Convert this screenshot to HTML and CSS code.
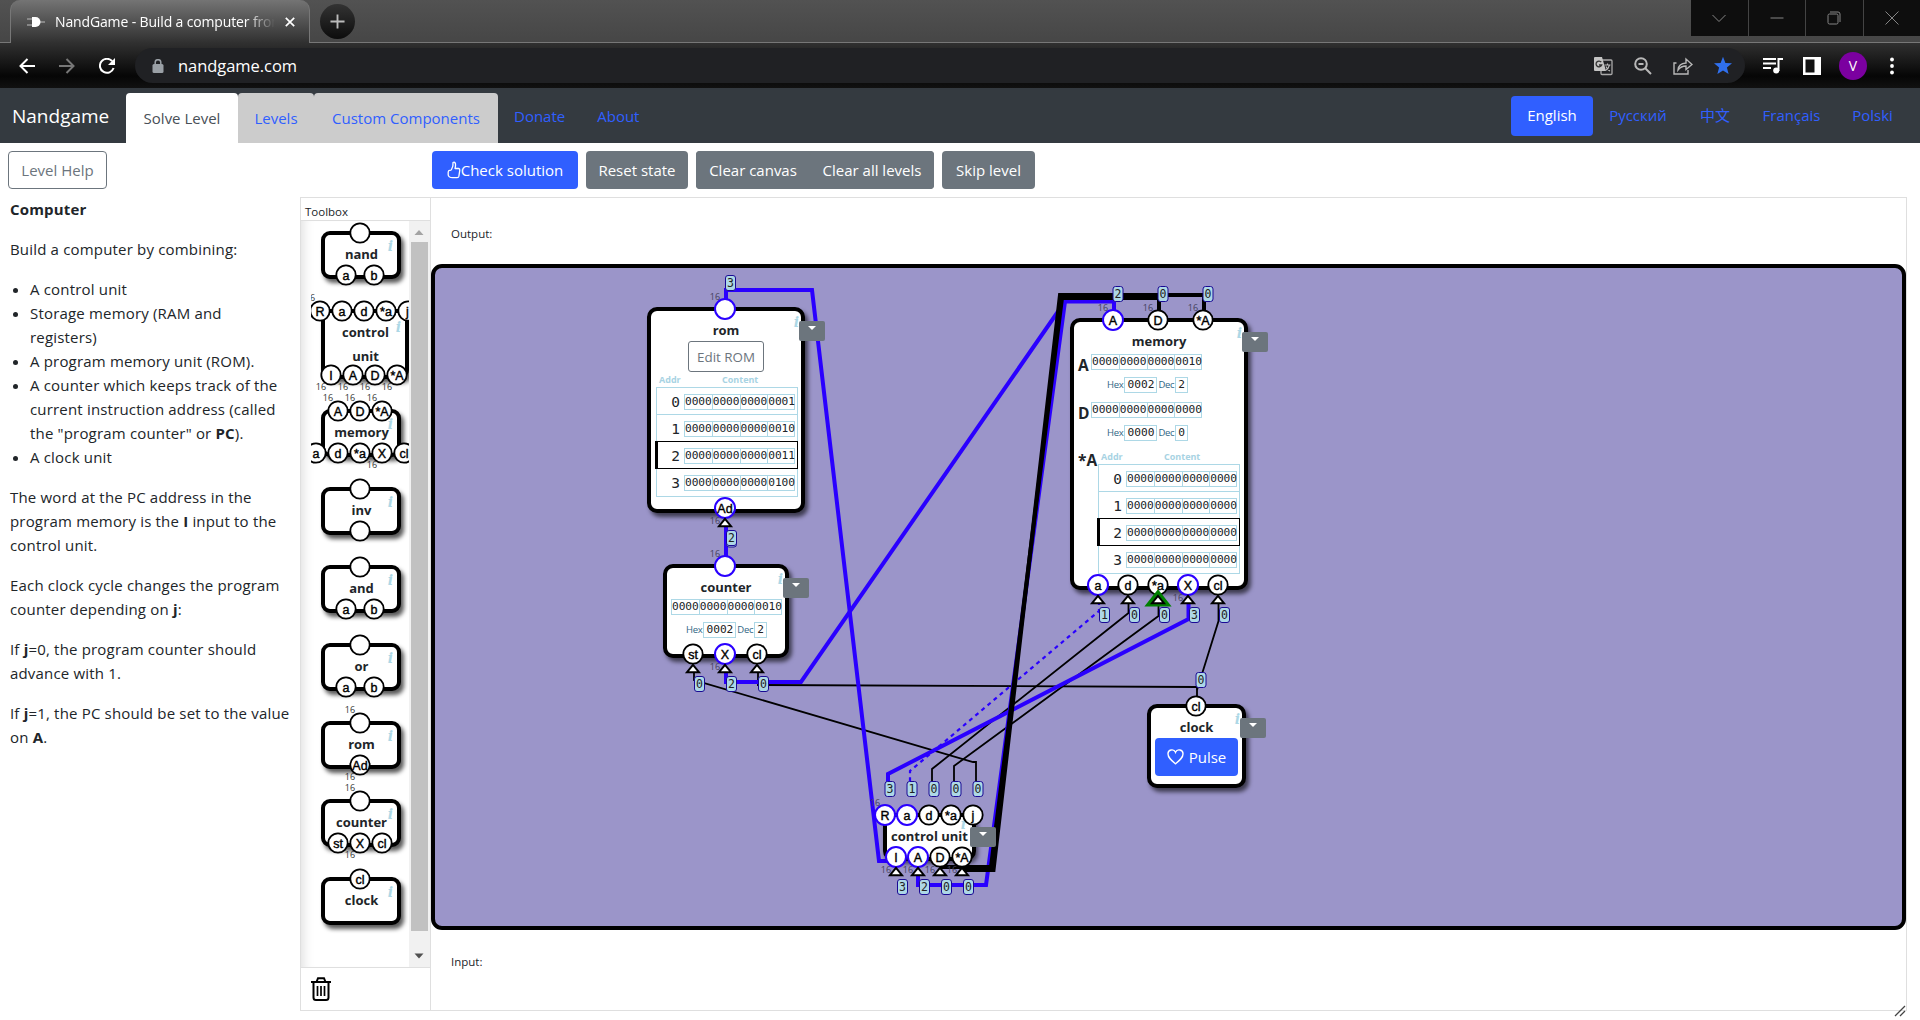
FILE: index.html
```html
<!DOCTYPE html>
<html lang="en">
<head>
<meta charset="utf-8">
<title>NandGame - Build a computer from scratch</title>
<link rel="stylesheet" href="styles.css">
</head>
<body>
<svg class="defs" width="0" height="0">
  <defs>
    <path id="arrow" d="M0 .8 6 8.2H-6Z" fill="#fff" stroke="#000" stroke-width="2"/>
    <rect id="badge" x="-5" y="-7.5" width="10" height="15" rx="2.5" fill="#add8e6" stroke="#1a0a94" stroke-width="1"/>
    <circle id="pin" r="9.7" fill="#fff" stroke="#000" stroke-width="1.8"/>
    <circle id="hot" r="10" fill="#fff" stroke="#2a00ff" stroke-width="2"/>
  </defs>
</svg>

<header class="browser">
  <div class="tabstrip">
    <div class="tab">
      <svg class="favicon" viewBox="0 0 18 14"><path d="M0 4h5M0 10h5M13 7h5" stroke="#999" stroke-width="1.6"/><path d="M5 2h3.500a5 5 0 0 1 0 10H5Z" fill="#fff"/></svg>
      <span class="tab-title">NandGame - Build a computer from</span>
      <svg class="close" viewBox="0 0 10 10"><path d="M.8.8l8.400 8.400M9.200.8.8 9.200" stroke="#fff" stroke-width="1.7"/></svg>
    </div>
    <div class="newtab"><svg viewBox="0 0 16 16"><path d="M8 .5v15M.5 8h15" stroke="#bbb" stroke-width="2"/></svg></div>
    <div class="winbtns">
      <span><svg viewBox="0 0 14 14"><path d="M.5 4 7 10.500 13.500 4"/></svg></span>
      <span><svg viewBox="0 0 14 14"><path d="M.5 7h13"/></svg></span>
      <span><svg viewBox="0 0 14 14"><rect x="1" y="3" width="10" height="10" rx="1.500"/><path d="M3 1h8q2 0 2 2v8"/></svg></span>
      <span><svg viewBox="0 0 14 14"><path d="M.5.5l13 13M13.500.5l-13 13"/></svg></span>
    </div>
  </div>
  <div class="toolbar">
    <svg class="navico" viewBox="0 0 16 16"><path d="M16 8H1.500M8.500 1 1.500 8l7 7"/></svg>
    <svg class="navico dim" viewBox="0 0 16 16"><path d="M0 8h14.500M7.500 1l7 7-7 7"/></svg>
    <svg class="navico" viewBox="0 0 16 16"><path d="M14.600 10A7 7 0 1 1 13.200 3.200"/><path d="M16 0v7H9Z" fill="#fff" stroke="none"/></svg>
    <div class="omnibox">
      <svg class="lock" viewBox="0 0 12 14"><rect x=".5" y="5" width="11" height="9" rx="1.500" fill="#9aa0a6"/><path d="M3.200 6V3.500a2.800 2.800 0 0 1 5.600 0V6" fill="none" stroke="#9aa0a6" stroke-width="1.500"/></svg>
      <span class="url">nandgame.com</span>
      <svg class="oico" viewBox="0 0 20 20"><rect x="8" y="4" width="11" height="14.500" rx="1" fill="none" stroke="#aaa" stroke-width="1.300"/><path d="M2 1h7l4 14H2q-1 0-1-1V2q0-1 1-1Z" fill="#c4c4c4"/><path d="M8.300 6.200A2.900 2.900 0 1 0 8.700 9H6" fill="none" stroke="#333" stroke-width="1.300"/><path d="M11.500 9h6M14.500 7.500V9M16.500 9q-1 4-4 5.500M13 10.500q1 3 4 4.500" fill="none" stroke="#bbb" stroke-width="1.100"/></svg>
      <svg class="oico" viewBox="0 0 20 20"><g fill="none" stroke="#b8b8b8" stroke-width="2"><circle cx="8" cy="8" r="5.800"/><path d="M5.500 8h5M12.300 12.300l5.700 5.700"/></g></svg>
      <svg class="oico" viewBox="0 0 20 20"><g fill="none" stroke="#b8b8b8" stroke-width="1.400"><path d="M3.500 7H1v11h14v-4"/><path d="M5 14q.5-6.500 8-7V3l6 5.500-6 5v-3.500q-5 0-8 4Z"/></g></svg>
      <svg class="oico" viewBox="0 0 20 20"><path d="M10 .8l2.400 6.100 6.600.4-5.100 4.200 1.700 6.500L10 14.400 4.400 18l1.700-6.500L1 7.300l6.600-.4Z" fill="#3070ee"/></svg>
    </div>
    <svg class="bico" viewBox="0 0 20 20"><g stroke="#fff" stroke-width="2" fill="none"><path d="M0 3h13M0 7.500h13M0 12h8M15.500 15V3H20"/></g><circle cx="13.200" cy="14.500" r="3" fill="#fff"/></svg>
    <svg class="bico panel" viewBox="0 0 18 18"><path d="M0 0h18v18H0Z" fill="#fff"/><path d="M2.500 2.500h9v13h-9Z" fill="#111"/></svg>
    <div class="avatar">V</div>
    <svg class="dots" viewBox="0 0 4 18"><circle cx="2" cy="2.500" r="1.900"/><circle cx="2" cy="9" r="1.900"/><circle cx="2" cy="15.500" r="1.900"/></svg>
  </div>
</header>

<nav class="nav">
  <span class="brand">Nandgame</span>
  <a class="navtab active w1">Solve Level</a><a class="navtab w2">Levels</a><a class="navtab w3">Custom Components</a>
  <a class="link">Donate</a><a class="link">About</a>
  <div class="langs"><a class="lang on">English</a><a class="lang l2">Русский</a><a class="lang l3">中文</a><a class="lang l4">Français</a><a class="lang l5">Polski</a></div>
</nav>

<div class="actions">
  <button class="btn outline b-help">Level Help</button>
  <button class="btn primary b-check"><svg viewBox="0 0 14 18"><path d="M4.500 8.500Q6.500 5 6 1.500q2-1 2.500 1.500.3 2-.5 4.500h3.500q1.500.2 1.300 1.700l-.9 6q-.3 1.500-1.700 1.500H5.500Q1.500 16.500 1.200 14v-3q.2-1.500 1.500-1.600Q4 9.400 4.500 8.500Z" fill="none" stroke="#fff" stroke-width="1.300" stroke-linejoin="round"/></svg>Check solution</button>
  <button class="btn grey b-reset">Reset state</button>
  <div class="group"><button class="btn grey b-canvas">Clear canvas</button><button class="btn grey b-levels">Clear all levels</button></div>
  <button class="btn grey b-skip">Skip level</button>
</div>

<main class="work">
  <article class="help">
    <p><b>Computer</b></p>
    <p>Build a computer by combining:</p>
    <ul>
      <li>A control unit</li>
      <li>Storage memory (RAM and<br>registers)</li>
      <li>A program memory unit (ROM).</li>
      <li>A counter which keeps track of the<br>current instruction address (called<br>the "program counter" or <b>PC</b>).</li>
      <li>A clock unit</li>
    </ul>
    <p>The word at the PC address in the<br>program memory is the <b>I</b> input to the<br>control unit.</p>
    <p>Each clock cycle changes the program<br>counter depending on <b>j</b>:</p>
    <p>If <b>j</b>=0, the program counter should<br>advance with 1.</p>
    <p>If <b>j</b>=1, the PC should be set to the value<br>on <b>A</b>.</p>
  </article>

  <aside class="toolbox">
    <div class="tb-title">Toolbox</div>
    <div class="tb-body">
      <div class="tb-list">
        <div class="comp">nand<i>i</i>
          <svg class="pins"><use href="#pin" x="39" y="2"/><use href="#pin" x="25" y="44"/><use href="#pin" x="53" y="44"/><text x="25" y="48.500">a</text><text x="53" y="48.500">b</text></svg></div>
        <div class="comp tall"><span>control<br>unit</span><i>i</i>
          <svg class="pins"><use href="#pin" x="-1" y="2"/><use href="#pin" x="21" y="2"/><use href="#pin" x="43" y="2"/><use href="#pin" x="65" y="2"/><use href="#pin" x="87" y="2"/><use href="#pin" x="10" y="66"/><use href="#pin" x="32" y="66"/><use href="#pin" x="54" y="66"/><use href="#pin" x="76" y="66"/>
          <text x="-1" y="6.500">R</text><text x="21" y="6.500">a</text><text x="43" y="6.500">d</text><text x="65" y="6.500">*a</text><text x="86.500" y="6.500">j</text><text x="10" y="70.500">I</text><text x="32" y="70.500">A</text><text x="54" y="70.500">D</text><text x="76" y="70.500">*A</text>
          <g class="bits"><text x="-11" y="-8">16</text><text x="0" y="81">16</text><text x="22" y="81">16</text><text x="44" y="81">16</text><text x="66" y="81">16</text></g></svg></div>
        <div class="comp">memory<i>i</i>
          <svg class="pins"><use href="#pin" x="17" y="2"/><use href="#pin" x="39" y="2"/><use href="#pin" x="61" y="2"/><use href="#pin" x="-5" y="44"/><use href="#pin" x="17" y="44"/><use href="#pin" x="39" y="44"/><use href="#pin" x="61" y="44"/><use href="#pin" x="83" y="44"/>
          <text x="17" y="6.500">A</text><text x="39" y="6.500">D</text><text x="61" y="6.500">*A</text><text x="-5" y="48.500">a</text><text x="17" y="48.500">d</text><text x="39" y="48.500">*a</text><text x="61" y="48.500">X</text><text x="83" y="48.500">cl</text>
          <g class="bits"><text x="7" y="-8">16</text><text x="29" y="-8">16</text><text x="51" y="-8">16</text><text x="51" y="59">16</text></g></svg></div>
        <div class="comp">inv<i>i</i>
          <svg class="pins"><use href="#pin" x="39" y="2"/><use href="#pin" x="39" y="44"/></svg></div>
        <div class="comp">and<i>i</i>
          <svg class="pins"><use href="#pin" x="39" y="2"/><use href="#pin" x="25" y="44"/><use href="#pin" x="53" y="44"/><text x="25" y="48.500">a</text><text x="53" y="48.500">b</text></svg></div>
        <div class="comp">or<i>i</i>
          <svg class="pins"><use href="#pin" x="39" y="2"/><use href="#pin" x="25" y="44"/><use href="#pin" x="53" y="44"/><text x="25" y="48.500">a</text><text x="53" y="48.500">b</text></svg></div>
        <div class="comp">rom<i>i</i>
          <svg class="pins"><g class="bits"><text x="29" y="-8">16</text><text x="29" y="59">16</text></g><use href="#pin" x="39" y="2"/><use href="#pin" x="39" y="44"/><text x="39" y="48.500">Ad</text></svg></div>
        <div class="comp">counter<i>i</i>
          <svg class="pins"><g class="bits"><text x="29" y="-8">16</text><text x="29" y="59">16</text></g><use href="#pin" x="39" y="2"/><use href="#pin" x="17" y="44"/><use href="#pin" x="39" y="44"/><use href="#pin" x="61" y="44"/><text x="17" y="48.500">st</text><text x="39" y="48.500">X</text><text x="61" y="48.500">cl</text></svg></div>
        <div class="comp">clock<i>i</i>
          <svg class="pins"><use href="#pin" x="39" y="2"/><text x="39" y="6.500">cl</text></svg></div>
      </div>
      <div class="scroll"><svg viewBox="0 0 21 21"><path d="M5.500 14 10 9l4.500 5Z" fill="#a3a3a3"/></svg><div class="thumb"></div><svg viewBox="0 0 21 36"><path d="M5.500 22.500h9L10 27.500Z" fill="#505050"/></svg></div>
    </div>
    <div class="tb-trash"><svg viewBox="0 0 20 24"><g fill="none" stroke="#000" stroke-width="2"><path d="M0 5h20M5.500 5 7 1.200h6L14.500 5M2.500 5v15.500Q2.500 23 5 23h10q2.500 0 2.500-2.500V5"/><path d="M6.500 9v10M10 9v10M13.500 9v10" stroke-width="1.700"/></g></svg></div>
  </aside>

  <section class="stage">
    <div class="io">Output:</div>
    <div class="canvas">
      <svg class="layer" viewBox="435 268 1467 658">
        <g fill="none" stroke="#000" stroke-width="1.800">
          <path d="M694 670v10L973 762h3v20"/>
          <path d="M758 670v15L1197 687v14"/>
          <path d="M1128.500 601v12L932 769v14"/>
          <path d="M1158.500 601v15L954 766v17"/>
          <path d="M1218.500 601v20L1197 690"/>
        </g>
        <g fill="none" stroke="#2a00ff" stroke-width="4">
          <path d="M726 303v-13h86L879 861h10"/>
          <path d="M726 560v-36"/>
          <path d="M726 670v12h75L1065 301.500"/>
          <path d="M1114 312v-10.500h-49L986 885h-68v-12"/>
          <path d="M1188.500 601v18L888 774v9"/>
          <path d="M1099 601v10L910 771v12" stroke-width="2.200" stroke-dasharray="4 4"/>
        </g>
        <g fill="none" stroke="#000" stroke-width="4">
          <path d="M1159 312v-14h-97L991 867h-51"/>
          <path d="M1204 312v-17h-144L993.500 870H962"/>
        </g>
      </svg>

      <div class="node n-rom">
        <h4>rom</h4><i>i</i>
        <button class="edit">Edit ROM</button>
        <div class="head"><span>Addr</span><span>Content</span></div>
        <div class="table">
          <div class="row"><em>0</em><div class="bin"><u>0000</u><u>0000</u><u>0000</u><u>0001</u></div></div>
          <div class="row"><em>1</em><div class="bin"><u>0000</u><u>0000</u><u>0000</u><u>0010</u></div></div>
          <div class="row cur"><em>2</em><div class="bin"><u>0000</u><u>0000</u><u>0000</u><u>0011</u></div></div>
          <div class="row"><em>3</em><div class="bin"><u>0000</u><u>0000</u><u>0000</u><u>0100</u></div></div>
        </div>
        <div class="menu"></div>
      </div>

      <div class="node n-counter">
        <h4>counter</h4><i>i</i>
        <div class="bin"><u>0000</u><u>0000</u><u>0000</u><u>0010</u></div>
        <div class="hex">Hex<u>0002</u>Dec<u>2</u></div>
        <div class="menu"></div>
      </div>

      <div class="node n-memory">
        <h4>memory</h4><i>i</i>
        <div class="reg"><b>A</b><div class="bin"><u>0000</u><u>0000</u><u>0000</u><u>0010</u></div></div>
        <div class="hex">Hex<u>0002</u>Dec<u>2</u></div>
        <div class="reg"><b>D</b><div class="bin"><u>0000</u><u>0000</u><u>0000</u><u>0000</u></div></div>
        <div class="hex">Hex<u>0000</u>Dec<u>0</u></div>
        <div class="ram">
          <b>*A</b>
          <div>
            <div class="head"><span>Addr</span><span>Content</span></div>
            <div class="table">
              <div class="row"><em>0</em><div class="bin"><u>0000</u><u>0000</u><u>0000</u><u>0000</u></div></div>
              <div class="row"><em>1</em><div class="bin"><u>0000</u><u>0000</u><u>0000</u><u>0000</u></div></div>
              <div class="row cur"><em>2</em><div class="bin"><u>0000</u><u>0000</u><u>0000</u><u>0000</u></div></div>
              <div class="row"><em>3</em><div class="bin"><u>0000</u><u>0000</u><u>0000</u><u>0000</u></div></div>
            </div>
          </div>
        </div>
        <div class="menu"></div>
      </div>

      <div class="node n-clock">
        <h4>clock</h4><i>i</i>
        <button class="btn primary pulse"><svg viewBox="0 0 17 16"><path d="M8.500 14.800C4 11 1 8.500 1 5A3.900 3.900 0 0 1 8.500 3.300 3.900 3.900 0 0 1 16 5c0 3.500-3 6-7.500 9.800Z" fill="none" stroke="#fff" stroke-width="1.400"/></svg>Pulse</button>
        <div class="menu"></div>
      </div>

      <div class="node n-cu"><h4>control unit</h4><i>i</i><div class="menu"></div></div>

      <svg class="layer" viewBox="435 268 1467 658">
        <g class="bits">
          <text x="715" y="300">16</text><text x="715" y="524">16</text><text x="715" y="557">16</text><text x="715" y="670">16</text>
          <text x="1103" y="311">16</text><text x="1148" y="311">16</text><text x="1193" y="311">16</text><text x="1178" y="601">16</text>
          <text x="875" y="806">16</text><text x="886" y="873">16</text><text x="908" y="873">16</text><text x="930" y="873">16</text><text x="952" y="873">16</text>
        </g>
        <g>
          <use href="#hot" x="725" y="309"/><use href="#hot" x="725" y="508"/><use href="#hot" x="725" y="566"/>
          <use href="#pin" x="693" y="654"/><use href="#hot" x="725" y="654"/><use href="#pin" x="757" y="654"/>
          <use href="#hot" x="1113" y="320"/><use href="#pin" x="1158" y="320"/><use href="#pin" x="1203" y="320"/>
          <use href="#hot" x="1098" y="585"/><use href="#pin" x="1128" y="585"/><use href="#pin" x="1158" y="585"/><use href="#hot" x="1188" y="585"/><use href="#pin" x="1218" y="585"/>
          <use href="#pin" x="1196" y="706"/>
          <use href="#hot" x="885" y="815"/><use href="#hot" x="907" y="815"/><use href="#pin" x="929" y="815"/><use href="#pin" x="951" y="815"/><use href="#pin" x="973" y="815"/>
          <use href="#hot" x="896" y="857"/><use href="#hot" x="918" y="857"/><use href="#pin" x="940" y="857"/><use href="#pin" x="962" y="857"/>
        </g>
        <g class="pt">
          <text x="725" y="512.500">Ad</text><text x="693" y="658.500">st</text><text x="725" y="658.500">X</text><text x="757" y="658.500">cl</text>
          <text x="1113" y="324.500">A</text><text x="1158" y="324.500">D</text><text x="1203" y="324.500">*A</text>
          <text x="1098" y="589.500">a</text><text x="1128" y="589.500">d</text><text x="1158" y="589.500">*a</text><text x="1188" y="589.500">X</text><text x="1218" y="589.500">cl</text>
          <text x="1196" y="710.500">cl</text>
          <text x="885" y="819.500">R</text><text x="907" y="819.500">a</text><text x="929" y="819.500">d</text><text x="951" y="819.500">*a</text><text x="973" y="819.500">j</text>
          <text x="896" y="861.500">I</text><text x="918" y="861.500">A</text><text x="940" y="861.500">D</text><text x="962" y="861.500">*A</text>
        </g>
        <path d="M1158 592.500 1167.500 604.500h-19Z" fill="#fff" stroke="#008000" stroke-width="4"/>
        <use href="#arrow" x="725" y="518"/><use href="#arrow" x="693" y="664"/><use href="#arrow" x="725" y="664"/><use href="#arrow" x="757" y="664"/>
        <use href="#arrow" x="1098" y="595"/><use href="#arrow" x="1128" y="595"/><use href="#arrow" x="1158" y="595"/><use href="#arrow" x="1188" y="595"/><use href="#arrow" x="1218" y="595"/>
        <use href="#arrow" x="896" y="867"/><use href="#arrow" x="918" y="867"/><use href="#arrow" x="940" y="867"/><use href="#arrow" x="962" y="867"/>
        <g>
          <use href="#badge" x="730.500" y="283"/><use href="#badge" x="731.500" y="539.500"/><use href="#badge" x="731.500" y="538"/>
          <use href="#badge" x="699.500" y="684"/><use href="#badge" x="731.500" y="684"/><use href="#badge" x="763.500" y="684"/>
          <use href="#badge" x="1118" y="294"/><use href="#badge" x="1163" y="294"/><use href="#badge" x="1208" y="294"/>
          <use href="#badge" x="1104.500" y="615"/><use href="#badge" x="1134.500" y="615"/><use href="#badge" x="1164.500" y="615"/><use href="#badge" x="1194.500" y="615"/><use href="#badge" x="1224.500" y="615"/>
          <use href="#badge" x="1201" y="680"/>
          <use href="#badge" x="890" y="789"/><use href="#badge" x="912" y="789"/><use href="#badge" x="934" y="789"/><use href="#badge" x="956" y="789"/><use href="#badge" x="978" y="789"/>
          <use href="#badge" x="902.500" y="887"/><use href="#badge" x="924.500" y="887"/><use href="#badge" x="946.500" y="887"/><use href="#badge" x="968.500" y="887"/>
        </g>
        <g class="val">
          <text x="730.500" y="287">3</text><text x="731.500" y="542">2</text>
          <text x="699.500" y="688">0</text><text x="731.500" y="688">2</text><text x="763.500" y="688">0</text>
          <text x="1118" y="298">2</text><text x="1163" y="298">0</text><text x="1208" y="298">0</text>
          <text x="1104.500" y="619">1</text><text x="1134.500" y="619">0</text><text x="1164.500" y="619">0</text><text x="1194.500" y="619">3</text><text x="1224.500" y="619">0</text>
          <text x="1201" y="684">0</text>
          <text x="890" y="793">3</text><text x="912" y="793">1</text><text x="934" y="793">0</text><text x="956" y="793">0</text><text x="978" y="793">0</text>
          <text x="902.500" y="891">3</text><text x="924.500" y="891">2</text><text x="946.500" y="891">0</text><text x="968.500" y="891">0</text>
        </g>
      </svg>
    </div>
    <div class="io in">Input:</div>
  </section>
</main>
<svg class="grip" viewBox="0 0 12 12"><path d="M1 11 11 1M6 11l5-5" stroke="#444" stroke-width="1.300"/></svg>
</body>
</html>
```
FILE: styles.css
```css
* { box-sizing: border-box; }
body {
  margin: 0; width: 1920px; height: 1020px; overflow: hidden; position: relative;
  display: flex; flex-direction: column; background: #fff; color: #212529;
  font: 15px/24px "Open Sans", "Noto Sans CJK SC", sans-serif;
}
svg { display: block; flex: none; }
.defs { position: absolute; }

/* browser frame */
.browser { flex: none; height: 88px; background: linear-gradient(#525252 0, #464646 42px, #303030 43px, #060606 76px, #111 88px); color: #fff; }
.tabstrip { height: 43px; display: flex; border-bottom: 1px solid #777; }
.tab {
  margin-left: 10px; width: 300px; height: 43px; display: flex; align-items: center; padding: 0 14px 0 16px;
  border: 1px solid #777; border-width: 0 1px; border-radius: 10px 10px 0 0; background: linear-gradient(#747474, #303030);
}
.favicon { width: 18px; height: 14px; }
.tab-title {
  margin-left: 10px; width: 220px; overflow: hidden; white-space: nowrap; font-size: 14px; letter-spacing: -.14px;
  -webkit-mask-image: linear-gradient(90deg, #000 190px, transparent 220px); mask-image: linear-gradient(90deg, #000 190px, transparent 220px);
}
.close { width: 10px; height: 10px; margin-left: 10px; }
.newtab { width: 35px; height: 35px; margin: 4px 0 0 10px; border-radius: 50%; background: linear-gradient(#333, #0c0c0c); display: flex; align-items: center; justify-content: center; }
.newtab svg { width: 15px; height: 15px; }
.winbtns { margin-left: auto; height: 36px; display: flex; gap: 1px; background: #444; }
.winbtns span { width: 56.500px; background: #0e0e0e; display: flex; align-items: center; justify-content: center; }
.winbtns svg { width: 14px; height: 14px; fill: none; stroke: #858585; }
.toolbar { height: 45px; display: flex; align-items: center; padding: 0 26px 0 19px; }
.navico { width: 16px; height: 16px; margin-right: 24px; fill: none; stroke: #fff; stroke-width: 2; }
.navico.dim { stroke: #777; }
.omnibox { margin-left: -4px; width: 1610px; height: 35px; border-radius: 18px; background: #202124; display: flex; align-items: center; padding: 0 12px 0 17px; }
.lock { width: 12px; height: 14px; }
.url { margin: 0 auto 0 14px; font-size: 16.500px; letter-spacing: -.05px; }
.oico { width: 20px; height: 20px; margin-left: 20px; }
.bico { width: 20px; height: 20px; margin-left: 18px; }
.bico.panel { width: 18px; height: 18px; margin-left: 20px; }
.avatar { width: 28px; height: 28px; margin-left: 18px; border-radius: 50%; background: #7b00a0; text-align: center; line-height: 28px; font-size: 14px; }
.dots { width: 4px; height: 18px; margin-left: auto; fill: #fff; }

/* site navigation */
.nav { flex: none; height: 55px; padding-left: 12px; background: #343a40; display: flex; align-items: center; white-space: nowrap; }
.brand { width: 114px; color: #fff; font-size: 19px; line-height: 30px; margin-top: 1px; }
.navtab { align-self: flex-end; height: 50px; line-height: 50px; text-align: center; border-radius: 4px 4px 0 0; background: #ccc; color: #305fff; }
.navtab.active { background: #fff; color: #495057; }
.w1 { width: 112px; } .w2 { width: 76px; } .w3 { width: 184px; }
.link { margin: 1px 16px 0; color: #305fff; }
.langs { margin-left: auto; margin-right: 11px; display: flex; }
.lang { height: 40px; line-height: 39px; text-align: center; color: #305fff; border-radius: 4px; margin-top: 1px; }
.lang.on { width: 82px; background: #305fff; color: #fff; }
.l2 { width: 90px; } .l3 { width: 64px; } .l4 { width: 89px; } .l5 { width: 73px; }

/* action bar */
.actions { flex: none; height: 54px; padding: 8px 8px 0; display: flex; align-items: flex-start; gap: 8px; }
.btn { height: 38px; padding: 0; border: 0; border-radius: 4px; color: #fff; font: 15px/38px "Open Sans", sans-serif; letter-spacing: 0; white-space: nowrap; display: flex; align-items: center; justify-content: center; }
.primary { background: #305fff; }
.grey { background: #6c757d; }
.outline { background: #fff; border: 1px solid #6c757d; color: #6c757d; }
.b-help { width: 99px; margin-right: 317px; }
.b-check { width: 146px; }
.b-check svg { width: 14px; height: 18px; }
.b-reset { width: 102px; }
.group { display: flex; background: #6c757d; border-radius: 4px; }
.b-canvas { width: 114px; } .b-levels { width: 124px; }
.b-skip { width: 93px; }

/* instructions */
.work { flex: 1; display: flex; min-height: 0; }
.help { width: 300px; padding: 0 0 0 10px; white-space: nowrap; letter-spacing: .18px; }
.help p { margin: 0 0 16px; }
.help ul { margin: 0 0 16px; padding-left: 20px; }

/* toolbox */
.toolbox { width: 130px; height: 814px; border: 1px solid #dfdfdf; border-right: 0; display: flex; flex-direction: column; }
.tb-title { height: 23px; padding-left: 4px; font-size: 11.500px; line-height: 28px; border-bottom: 1px solid #dfdfdf; }
.tb-body { flex: 1; display: flex; min-height: 0; box-shadow: inset 12px 0 12px -10px #ddd; }
.tb-list { margin-left: 10px; width: 98px; padding: 10px 0 0 10px; display: flex; flex-direction: column; gap: 30px; overflow: hidden; }
.comp {
  position: relative; flex: none; width: 80px; height: 48px; border: 4px solid #000; border-radius: 9px; background: #fff;
  box-shadow: 3px 4px 4px rgba(0,0,0,.65); text-align: center; font-weight: 700; font-size: 13px; line-height: 38px; padding-left: 1px;
}
.comp.tall { width: 88px; height: 70px; line-height: 24px; }
.comp.tall span { display: block; padding-top: 7px; }
.comp i, .node i { position: absolute; right: 4px; top: 1px; font: italic bold 14px/20px "DejaVu Serif", serif; color: #add8e6; }
.comp.tall i { top: 4px; right: 4px; }
.pins { position: absolute; left: -4px; top: -4px; width: 1px; height: 1px; overflow: visible; }
.pins text, .pt text { font: 12.500px "Liberation Sans", sans-serif; text-anchor: middle; fill: #000; stroke: #000; stroke-width: .4px; }
.pins .bits text, .bits text { font: 9px "Open Sans", sans-serif; text-anchor: middle; fill: #333; stroke: none; }
.scroll { width: 21px; background: #f1f1f1; display: flex; flex-direction: column; }
.thumb { flex: 1; margin: 0 2px; background: #c1c1c1; }
.tb-trash { height: 43px; padding: 9px 0 0 10px; border-top: 1px solid #dfdfdf; }
.tb-trash svg { width: 20px; height: 24px; }

/* canvas */
.stage { width: 1477px; height: 814px; border: 1px solid #dfdfdf; font-size: 11.500px; display: flex; flex-direction: column; }
.io { height: 66px; padding: 24px 0 0 20px; line-height: 24px; }
.io.in { padding-top: 20px; }
.canvas { position: relative; flex: none; height: 666px; border: 4px solid #000; border-radius: 11px; background: #9b95c9; }
.layer { position: absolute; left: 0; top: 0; width: 1467px; height: 658px; }
.canvas .bits text { fill: #44405c; }
.val text { font: 11.500px "DejaVu Sans Mono", monospace; text-anchor: middle; fill: #222; }
.node { position: absolute; border: 4px solid #000; border-radius: 10px; background: #fff; box-shadow: 3px 4px 4px rgba(0,0,0,.6); }
.node h4 { margin: 0; text-align: center; font-size: 13px; line-height: 20px; padding-top: 9px; white-space: nowrap; }
.node i { right: 2px; top: 1px; }
.n-rom { left: 212px; top: 39px; width: 158px; height: 206px; }
.n-counter { left: 228px; top: 296px; width: 126px; height: 94px; }
.n-memory { left: 635px; top: 50px; width: 178px; height: 272px; }
.n-clock { left: 712px; top: 436px; width: 99px; height: 84px; }
.n-cu { left: 448px; top: 545px; width: 93px; height: 48px; box-shadow: 2px 3px 4px rgba(0,0,0,.55); }
.n-cu i { top: -3px; right: 6px; }
.menu { position: absolute; right: -24px; top: 10px; width: 26px; height: 20px; border-radius: 2px; background: #6c757d; }
.menu::after { content: ""; position: absolute; left: 9px; top: 5px; border: 4px solid transparent; border-top-color: #fff; }
.edit { display: block; width: 76px; height: 31px; margin: 1px auto 0; padding: 0; border: 1px solid #6c757d; border-radius: 3px; background: #fff; color: #6c757d; font: 13.400px/28px "Open Sans", sans-serif; }
.head { display: flex; height: 15px; font-size: 9px; line-height: 15px; font-weight: 700; color: #a8d3e3; padding-left: 3px; }
.head span:first-child { width: 63px; }
.table { width: 142px; border: 1px solid #add8e6; }
.n-rom .head, .n-rom .table { margin-left: 5px; }
.row { height: 27px; padding: 1px 2px 0 0; display: flex; align-items: center; border-bottom: 1px solid #add8e6; }
.row:last-child { border-bottom: 0; }
.row.cur { margin: -1px -1px 0 -2px; height: 28px; border: 1px solid #000; border-left-width: 3px; }
.row em { flex: 1; text-align: right; padding-right: 4px; font: 14.500px "DejaVu Sans Mono", monospace; }
.bin { display: flex; border: 1px solid #add8e6; width: 111px; height: 16px; }
u { text-decoration: none; font: 11.200px/14px "DejaVu Sans Mono", monospace; }
.bin u { flex: 1; text-align: center; border-right: 1px solid #add8e6; white-space: nowrap; letter-spacing: -.05px; }
.bin u:last-child { border: 0; }
.n-counter .bin { margin: 2px 0 0 4px; }
.hex { display: flex; align-items: center; justify-content: center; height: 16px; margin-top: 7px; font-size: 9.500px; letter-spacing: -.3px; color: #2f6684; padding-left: 2px; }
.hex u { height: 16px; border: 1px solid #add8e6; padding: 0 2px; margin: 0 1px; color: #222; letter-spacing: 0; }
.n-memory .reg { display: flex; padding-left: 4px; margin-top: 3px; height: 17px; }
.reg b { width: 13px; font-size: 15.500px; line-height: 22px; }
.n-memory .hex { height: 16px; margin: 6px 0 9px; justify-content: flex-start; padding-left: 33px; }
.n-memory .hex + .reg { margin-top: 0; }
.n-memory .hex + .reg + .hex { margin-bottom: 8px; }
.ram { display: flex; padding-left: 4px; }
.ram b { width: 20px; font-size: 15.500px; line-height: 23px; }
.pulse { width: 83px; margin: 1px 0 0 4px; gap: 5px; }
.pulse svg { width: 17px; height: 16px; }
.grip { position: absolute; right: 14px; bottom: 3px; width: 12px; height: 12px; }
```
